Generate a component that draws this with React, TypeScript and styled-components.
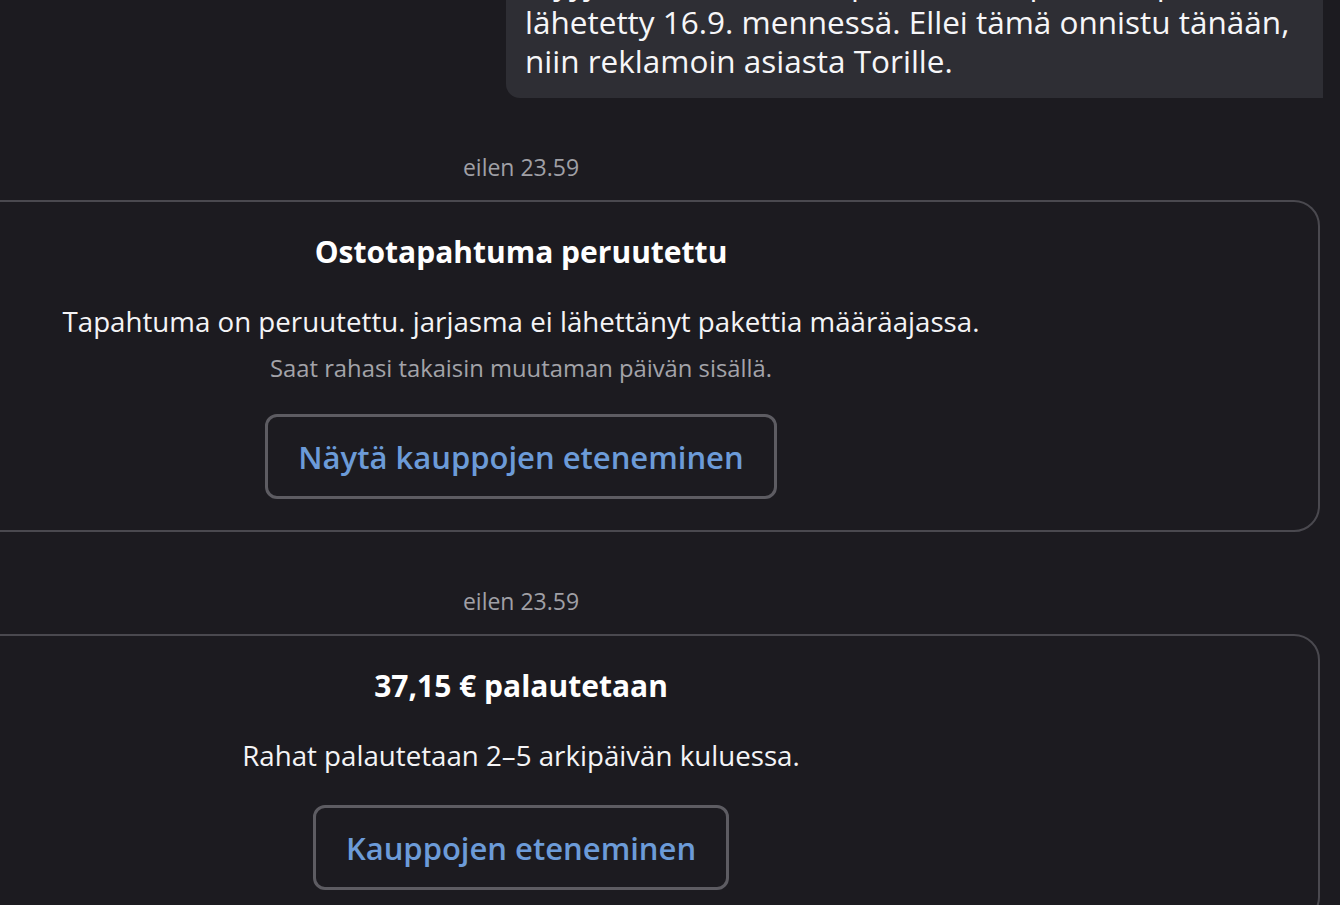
import React from "react";
import styled, { createGlobalStyle } from "styled-components";

const Global = createGlobalStyle`
  html, body { margin: 0; padding: 0; background: #1c1b20; overflow: hidden; }
  body { font-family: "Open Sans", "Noto Sans", sans-serif; color: #f4f4f6; }
`;

const Page = styled.div`
  width: 1340px;
  height: 905px;
  overflow: hidden;
  background: #1c1b20;
`;

const Column = styled.div`
  margin-left: -278px;
  width: 1598px;
  display: flex;
  flex-direction: column;
`;

const Bubble = styled.div`
  align-self: flex-end;
  margin-right: -3px;
  margin-top: -37px;
  width: 817px;
  box-sizing: border-box;
  background: #2e2e34;
  border-radius: 0 0 0 14px;
  padding: 0 10px 18px 19px;
  font-size: 31.5px;
  line-height: 39px;
  color: #f6f6f8;
  white-space: nowrap;
  overflow: hidden;
`;

const Stamp = styled.div<{ $top: number }>`
  margin-top: ${(p) => p.$top}px;
  text-align: center;
  font-size: 23px;
  line-height: 28px;
  color: #a0a0a6;
`;

const Card = styled.div<{ $top: number }>`
  margin-top: ${(p) => p.$top}px;
  border: 2px solid #4a494f;
  border-radius: 26px;
  display: flex;
  flex-direction: column;
  align-items: center;
  padding: 32px 0 31px;
`;

const Title = styled.div`
  font-size: 30px;
  font-weight: 700;
  line-height: 36px;
  color: #ffffff;
`;

const Body = styled.div`
  margin-top: 34px;
  font-size: 27.7px;
  line-height: 34px;
  color: #f4f4f6;
`;

const Sub = styled.div`
  margin-top: 16px;
  font-size: 23.8px;
  line-height: 28px;
  color: #a3a3a9;
`;

const Button = styled.button<{ $top: number }>`
  margin-top: ${(p) => p.$top}px;
  height: 85px;
  box-sizing: border-box;
  padding: 0 30px;
  border: 3px solid #5d5c62;
  border-radius: 12px;
  background: transparent;
  font-family: inherit;
  font-size: 31px;
  font-weight: 600;
  color: #6c9bd8;
  cursor: pointer;
`;

export default function App() {
  return (
    <Page>
      <Global />
      <Column>
        <Bubble>
          Myyjä ei ole vieläkään postittanut, pakettia piti olla
          <br />
          lähetetty 16.9. mennessä. Ellei tämä onnistu tänään,
          <br />
          niin reklamoin asiasta Torille.
        </Bubble>
        <Stamp $top={55}>eilen 23.59</Stamp>
        <Card $top={19}>
          <Title>Ostotapahtuma peruutettu</Title>
          <Body>Tapahtuma on peruutettu. jarjasma ei lähettänyt pakettia määräajassa.</Body>
          <Sub>Saat rahasi takaisin muutaman päivän sisällä.</Sub>
          <Button $top={32}>Näytä kauppojen eteneminen</Button>
        </Card>
        <Stamp $top={55}>eilen 23.59</Stamp>
        <Card $top={19}>
          <Title>37,15 € palautetaan</Title>
          <Body>Rahat palautetaan 2–5 arkipäivän kuluessa.</Body>
          <Button $top={33}>Kauppojen eteneminen</Button>
        </Card>
      </Column>
    </Page>
  );
}
